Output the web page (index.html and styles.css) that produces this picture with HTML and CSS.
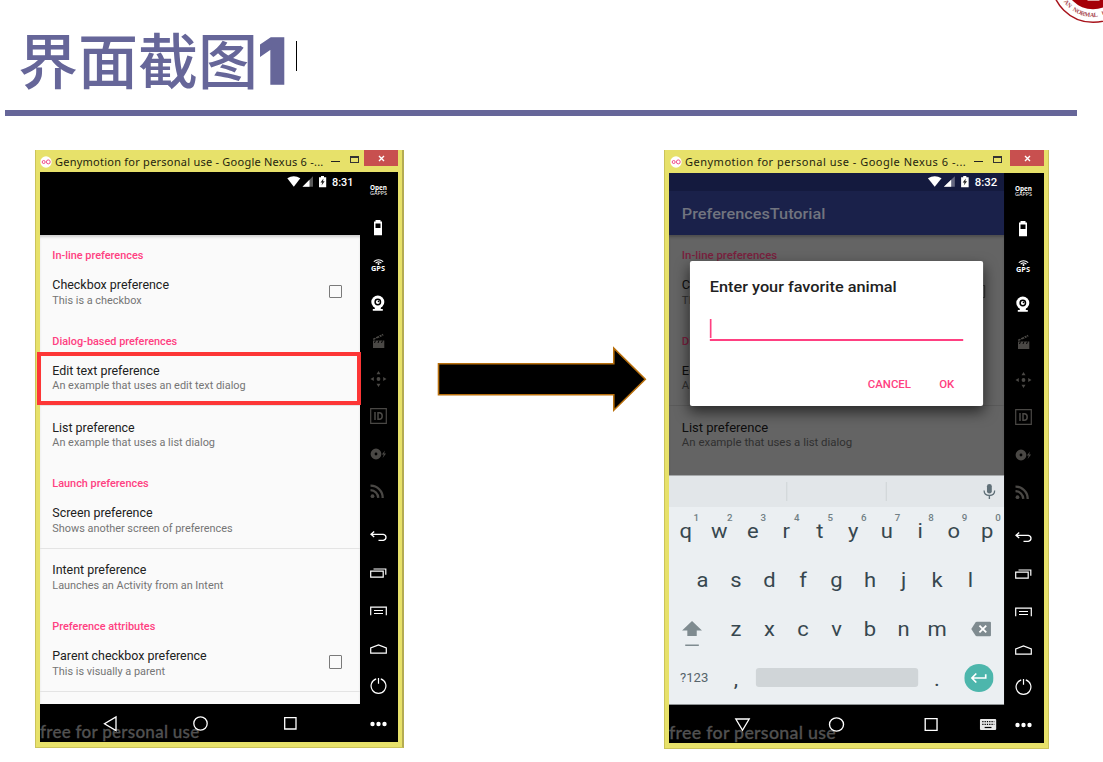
FILE: index.html
```html
<!DOCTYPE html>
<html lang="zh-CN">
<head>
<meta charset="utf-8">
<title>界面截图1</title>
<link rel="stylesheet" href="styles.css">
</head>
<body>
<svg class="defs" width="0" height="0">
  <symbol id="gapps" viewBox="0 0 20 16"><text x="1" y="7.5" class="t-open" textLength="17" lengthAdjust="spacingAndGlyphs">Open</text><text x="1" y="13.3" class="t-gapps" textLength="17" lengthAdjust="spacingAndGlyphs">GAPPS</text></symbol>
  <symbol id="battery" viewBox="0 0 20 16"><path fill="currentColor" fill-rule="evenodd" d="M6.500 0h5v1.400H13V15.300H5V1.400h1.500zM6.500 3.500v4.500h5V3.500z"/></symbol>
  <symbol id="gps" viewBox="0 0 20 16"><g fill="none" stroke="currentColor" stroke-width="1.1"><path d="M4.800 3.700Q9.500-.300 14.200 3.700M6.600 5.200Q9.500 2.500 12.400 5.200"/></g><circle cx="9.500" cy="6" r="1" fill="currentColor"/><text x="2" y="13.300" class="t-gps" textLength="14" lengthAdjust="spacingAndGlyphs">GPS</text></symbol>
  <symbol id="cam" viewBox="0 0 20 16"><circle cx="8.800" cy="7" r="6.500" fill="currentColor"/><path d="M5.800 12h6v2h2v1.700h-10V14h2z" fill="currentColor"/><circle cx="8.800" cy="7" r="2.700" fill="none" stroke="#000" stroke-width="1.500"/><circle cx="9.500" cy="6.400" r=".8" fill="#000"/></symbol>
  <symbol id="clap" viewBox="0 0 20 16"><path fill="currentColor" d="M4 7.500h11.300V15H4zM3.800 5.700 13.800.8l.8 1.600L4.600 7z"/><path stroke="#000" stroke-width="1" d="m6 4 1.500 2M9.500 2.300 11 4.300M12 1.200l1.500 2M6.500 7.500 5.500 10M10 7.500 9 10M13.500 7.500l-1 2.500"/></symbol>
  <symbol id="move" viewBox="0 0 20 16"><path fill="currentColor" d="m9.500 0 2 3.300h-4zM9.500 16l2-3.300h-4zM1.500 8l3.300-2v4zM17.500 8l-3.300-2v4z"/><circle cx="9.500" cy="8" r="1.900" fill="currentColor"/></symbol>
  <symbol id="ident" viewBox="0 0 20 16"><path fill="none" stroke="currentColor" stroke-width="1.200" d="M1.700.6h15.600v14.800H1.700z"/><path fill="none" stroke="currentColor" stroke-width="1.500" d="M6 4v8M9 4.700v6.600h1.300q2.900 0 2.900-3.300t-2.900-3.300z"/></symbol>
  <symbol id="disc" viewBox="0 0 20 16"><circle cx="7" cy="8" r="3.400" fill="none" stroke="currentColor" stroke-width="4"/><path fill="currentColor" d="m16 4.500-3.200 4h2l-1.200 3.500 3.500-4.600h-2z"/></symbol>
  <symbol id="rss" viewBox="0 0 20 16"><circle cx="3.500" cy="12.200" r="1.900" fill="currentColor"/><path fill="none" stroke="currentColor" stroke-width="2.300" d="M1.500 6.100a8 8 0 0 1 7.800 7.800M1.500 1.700a12 12 0 0 1 12.200 12.200"/></symbol>
  <symbol id="back" viewBox="0 0 20 16"><path fill="none" stroke="currentColor" stroke-width="1.300" d="M5.200 3.500 2 6.300l3.200 2.800M2.300 6.300h12q2.700.4 2.700 3t-2.700 3H9.500"/></symbol>
  <symbol id="recent" viewBox="0 0 20 16"><path fill="none" stroke="currentColor" stroke-width="1.200" d="M1.700 6.200h12.500v6H1.700zM4.500 4h12.300v5.700"/></symbol>
  <symbol id="menu" viewBox="0 0 20 16"><path fill="none" stroke="currentColor" stroke-width="1.200" d="M1.700 12.300V4.200h15.600v8.100M5 7.500h9M5 10.500h9"/></symbol>
  <symbol id="home" viewBox="0 0 20 16"><path fill="none" stroke="currentColor" stroke-width="1.200" d="M1.700 12.200V7L9.500 4l7.800 3v5.200z"/></symbol>
  <symbol id="power" viewBox="0 0 20 16"><path fill="none" stroke="currentColor" stroke-width="1.200" d="M7.200.9a7.400 7.400 0 1 0 4.600 0M9.500-.5v6.300"/></symbol>
  <symbol id="dots" viewBox="0 0 20 16"><g fill="currentColor"><circle cx="3.500" cy="8" r="2.200"/><circle cx="9.500" cy="8" r="2.200"/><circle cx="15.500" cy="8" r="2.200"/></g></symbol>
  <symbol id="status" viewBox="0 0 42 12"><path fill="#fff" d="M.3 2.300Q6.800-1.700 13.300 2.300L6.800 10.800z"/><path fill="#fff" opacity=".35" d="M26 .3v10.500H15.500z"/><path fill="#fff" d="M22.500 3.700v7.100h-7z"/><path fill="#fff" d="M34 0h3v1.200h2.200v10H32v-10h2z"/><path fill="#222" d="m36.500 2.500-3 4h1.800L34.500 9.500l3.200-4.200H36z"/></symbol>
  <symbol id="gm" viewBox="0 0 12 12"><circle cx="6" cy="6" r="5.700" fill="#fff"/><g fill="none" stroke="#ee4f8c" stroke-width="1"><circle cx="3.700" cy="6" r="1.500"/><ellipse cx="8.300" cy="5.900" rx="1.900" ry="2"/></g></symbol>
</svg>

<header class="slide-head">
  <h1 class="slide-title"><span class="han">界面截图</span><span class="num">1</span><i class="text-caret"></i></h1>
  <svg class="seal" width="51" height="26" viewBox="1052 0 51 26">
    <circle cx="1093" cy="-19" r="41.300" fill="#fff" stroke="#a8141c" stroke-width="1.500"/>
    <circle cx="1093" cy="-19" r="28.300" fill="#a50008"/>
    <path d="M1087.500.5h12" stroke="#dda0a0" stroke-width="1"/>
    <path id="ring" fill="none" d="M1057-19a36 36 0 0 0 72 0"/>
    <text class="seal-text"><textPath href="#ring" startOffset="22">AN</textPath></text>
    <text class="seal-text"><textPath href="#ring" startOffset="34.500" textLength="27">NORMAL</textPath></text>
    <text class="seal-text"><textPath href="#ring" startOffset="66">U</textPath></text>
  </svg>
</header>

<main class="stage">
  <section class="window left">
    <div class="titlebar">
      <svg class="gm" width="12" height="12"><use href="#gm"/></svg>
      <span class="caption">Genymotion for personal use - Google Nexus 6 -...</span>
      <i class="min"></i><i class="max"></i><span class="close"><svg width="7" height="7" viewBox="0 0 7 7"><path d="m1 1 5 5M6 1 1 6"/></svg></span>
    </div>
    <div class="device">
      <div class="screen">
        <div class="statusbar"><svg width="42" height="12"><use href="#status"/></svg><span>8:31</span></div>
        <div class="appbar"></div>
        <div class="list">
          <h2>In-line preferences</h2>
          <div class="pref"><b>Checkbox preference</b><small>This is a checkbox</small><i class="box"></i></div>
          <h2>Dialog-based preferences</h2>
          <div class="pref line"><b>Edit text preference</b><small>An example that uses an edit text dialog</small><div class="highlight"></div></div>
          <div class="pref"><b>List preference</b><small>An example that uses a list dialog</small></div>
          <h2>Launch preferences</h2>
          <div class="pref line"><b>Screen preference</b><small>Shows another screen of preferences</small></div>
          <div class="pref"><b>Intent preference</b><small>Launches an Activity from an Intent</small></div>
          <h2>Preference attributes</h2>
          <div class="pref line"><b>Parent checkbox preference</b><small>This is visually a parent</small><i class="box"></i></div>
        </div>
        <div class="navbar">
          <span class="watermark">free for personal use</span>
          <svg width="320" height="38" viewBox="0 0 320 38"><g fill="none" stroke="#fff" stroke-width="1.300"><path d="M76 13v13.500l-11.500-6.800z"/><circle cx="160.500" cy="19.500" r="6.700"/><path d="M244.700 13.700h11.300v11.300h-11.300z"/></g></svg>
        </div>
      </div>
      <div class="tools">
        <svg><use href="#gapps"/></svg><svg><use href="#battery"/></svg><svg><use href="#gps"/></svg><svg><use href="#cam"/></svg>
        <svg class="off"><use href="#clap"/></svg><svg class="off"><use href="#move"/></svg><svg class="off"><use href="#ident"/></svg><svg class="off"><use href="#disc"/></svg><svg class="off"><use href="#rss"/></svg>
        <svg class="first-key"><use href="#back"/></svg><svg><use href="#recent"/></svg><svg><use href="#menu"/></svg><svg><use href="#home"/></svg><svg><use href="#power"/></svg><svg><use href="#dots"/></svg>
      </div>
    </div>
  </section>

  <svg class="arrow" width="214" height="70" viewBox="434 344 214 70"><path d="M438.500 363.700h175.300v-15.500l31.500 31-31.500 31V394.700H438.500z"/></svg>

  <section class="window right">
    <div class="titlebar">
      <svg class="gm" width="12" height="12"><use href="#gm"/></svg>
      <span class="caption">Genymotion for personal use - Google Nexus 6 -...</span>
      <i class="min"></i><i class="max"></i><span class="close"><svg width="7" height="7" viewBox="0 0 7 7"><path d="m1 1 5 5M6 1 1 6"/></svg></span>
    </div>
    <div class="device">
      <div class="screen-slot">
      <div class="screen">
        <div class="statusbar"><svg width="42" height="12"><use href="#status"/></svg><span>8:32</span></div>
        <div class="appbar">PreferencesTutorial</div>
        <div class="list">
          <h2>In-line preferences</h2>
          <div class="pref"><b>Checkbox preference</b><small>This is a checkbox</small><i class="box"></i></div>
          <h2>Dialog-based preferences</h2>
          <div class="pref line"><b>Edit text preference</b><small>An example that uses an edit text dialog</small></div>
          <div class="pref"><b>List preference</b><small>An example that uses a list dialog</small></div>
        </div>
        <div class="dialog">
          <div class="dialog-title">Enter your favorite animal</div>
          <div class="field"></div>
          <div class="actions"><span>CANCEL</span><span>OK</span></div>
        </div>
        <div class="suggest"><i></i><i></i><svg width="12" height="16" viewBox="0 0 12 16"><rect x="3.700" y="0" width="4.600" height="9.500" rx="2.300" fill="#607078"/><path fill="none" stroke="#607078" stroke-width="1.300" d="M.9 6.500q.2 5 5.100 5t5.100-5M6 11.500V15"/></svg></div>
        <div class="keys">
          <div class="row"><span>q<sup>1</sup></span><span>w<sup>2</sup></span><span>e<sup>3</sup></span><span>r<sup>4</sup></span><span>t<sup>5</sup></span><span>y<sup>6</sup></span><span>u<sup>7</sup></span><span>i<sup>8</sup></span><span>o<sup>9</sup></span><span>p<sup>0</sup></span></div>
          <div class="row"><span>a</span><span>s</span><span>d</span><span>f</span><span>g</span><span>h</span><span>j</span><span>k</span><span>l</span></div>
          <div class="row"><span class="wide"><svg class="shift" width="20" height="28" viewBox="0 0 20 28"><path fill="#7f8b90" d="m10 2 9.500 9.500h-5V17h-9v-5.500h-5zM3.500 25.500h13v1.500h-13z"/></svg></span><span>z</span><span>x</span><span>c</span><span>v</span><span>b</span><span>n</span><span>m</span><span class="wide"><svg class="erase" width="20" height="16" viewBox="0 0 20 16"><path fill="#7f8b90" d="M6 .7h12.500q1 0 1 1v12.600q0 1-1 1H6q-.8 0-1.300-.7L.7 8l4-6.600Q5.200.7 6 .7z"/><path stroke="#fff" stroke-width="1.700" d="m8.500 4.700 6.500 6.600m0-6.600-6.500 6.600"/></svg></span></div>
          <div class="row last"><span class="wide sym">?123</span><span class="punct">,</span><span class="space"></span><span class="punct">.</span><span class="wide"><svg width="28" height="28" viewBox="0 0 28 28"><circle cx="14" cy="14" r="14" fill="#4db6ac"/><path fill="none" stroke="#fff" stroke-width="1.600" d="M11.500 9.500 7.300 14l4.200 4.500M7.500 14h13v-3.800"/></svg></span></div>
        </div>
        <div class="navbar">
          <span class="watermark">free for personal use</span>
          <svg width="320" height="38" viewBox="0 0 320 38"><g fill="none" stroke="#fff" stroke-width="1.300"><path d="M63.800 14h12.800l-6.400 11.300z"/><circle cx="160" cy="19.500" r="6.700"/><path d="M244.700 13.700h11.300v11.600h-11.300z"/></g><rect x="297" y="14" width="15.500" height="11" rx="1" fill="#e8e8e8"/><path stroke="#000" stroke-width="1.200" stroke-dasharray="1.200 1" d="M299.200 16.700h11.500M299.200 19.400h11.500"/><path stroke="#000" stroke-width="1.200" d="M301.500 22.500h6.500"/></svg>
        </div>
      </div>
      </div>
      <div class="tools">
        <svg><use href="#gapps"/></svg><svg><use href="#battery"/></svg><svg><use href="#gps"/></svg><svg><use href="#cam"/></svg>
        <svg class="off"><use href="#clap"/></svg><svg class="off"><use href="#move"/></svg><svg class="off"><use href="#ident"/></svg><svg class="off"><use href="#disc"/></svg><svg class="off"><use href="#rss"/></svg>
        <svg class="first-key"><use href="#back"/></svg><svg><use href="#recent"/></svg><svg><use href="#menu"/></svg><svg><use href="#home"/></svg><svg><use href="#power"/></svg><svg><use href="#dots"/></svg>
      </div>
    </div>
  </section>
</main>
</body>
</html>
```
FILE: styles.css
```css
* { box-sizing: border-box; }
body { margin: 0; width: 1103px; height: 762px; overflow: hidden; background: #fff; font-family: Roboto, "Noto Sans CJK SC", sans-serif; }
.defs { position: absolute; }
.t-open { font: 700 7.5px "Open Sans", sans-serif; fill: #fff; }
.t-gapps { font: 5.5px "Open Sans", sans-serif; fill: #fff; }
.t-gps { font: 700 6.5px "Open Sans", sans-serif; fill: #fff; }

.slide-head { display: flex; justify-content: space-between; height: 116px; position: relative; }
.slide-head::after { content: ""; position: absolute; left: 5px; top: 110px; width: 1072px; height: 6px; background: #669; }
.slide-title { display: flex; align-items: flex-start; margin: 0; padding-left: 18px; height: 110px; color: #669; font-weight: 400; }
.han { font: 500 60px/60px "Noto Sans CJK SC", sans-serif; padding-top: 28px; width: 240px; white-space: nowrap; }
.num { font: 900 63px/60px Inter, sans-serif; padding-top: 31px; width: 38px; -webkit-text-stroke: 1.5px #669; }
.text-caret { width: 1px; height: 30px; margin-top: 41px; background: #000; }
.seal { display: block; }
.seal-text { font: 700 6.3px "Liberation Serif", serif; fill: #a84a50; }

.stage { display: flex; align-items: flex-start; padding: 34px 0 0 35px; }
.window { position: relative; display: flex; flex-direction: column; background: #e7e16a; border: 1px solid #cbc35a; border-top: 0; }
.window.left { width: 369px; height: 598px; border-right: 2px solid #b5ac52; padding: 0 4px; }
.window.right { width: 385px; height: 599px; margin-left: 16px; padding: 0 4px; }
.arrow { margin: 194px 0 0 30px; flex: none; }
.arrow path { fill: #000; stroke: #b86f0c; stroke-width: 1.6; }

.titlebar { display: flex; align-items: flex-start; height: 22px; flex: none; }
.right .titlebar { height: 23px; }
.gm { margin-top: 6px; flex: none; }
.caption { margin-left: 3px; font: 11px/23px "Noto Sans", sans-serif; color: #24240f; white-space: nowrap; flex: none; width: 276px; letter-spacing: .24px; }
.min { width: 9px; height: 1px; margin-top: 11px; background: #222; }
.max { width: 9px; height: 7px; margin: 6px 0 0 10px; border: 1px solid #333; border-top-width: 2px; }
.close { display: flex; align-items: center; justify-content: center; width: 34px; height: 16px; margin-left: auto; background: #c8504f; }
.close path { stroke: #fff; stroke-width: 1.4; }
.right .gm { margin-left: 1px; }
.right .caption { width: 289px; letter-spacing: .5px; }

.device { display: flex; background: #000; height: 570px; }
.screen { position: relative; width: 320px; height: 570px; flex: none; display: flex; flex-direction: column; }
.screen-slot { width: 335px; flex: none; }
.right .screen { transform: scaleX(1.047); transform-origin: 0 0; }
.statusbar { display: flex; align-items: center; height: 20px; padding-left: 247px; color: #fff; font-size: 10.9px; font-weight: 500; gap: 3px; flex: none; }
.statusbar span { padding-top: 1px; }
.appbar { height: 43px; flex: none; }
.list { position: relative; height: 469px; flex: none; background: #fafafa; box-shadow: inset 0 3px 3px -1px #ccc; }
.list h2 { margin: 0; height: 28.5px; padding: 13px 0 0 12.3px; font: 500 10.9px/16px Roboto, sans-serif; color: #ff4081; }
.pref { position: relative; display: flex; flex-direction: column; height: 57.1px; padding: 13.5px 0 0 12.3px; }
.pref b { font: 400 12.45px/15.6px Roboto, sans-serif; color: #212121; }
.pref small { font: 400 10.9px/16px Roboto, sans-serif; color: #757575; }
.pref.line { border-bottom: 1px solid #e4e4e4; }
.box { position: absolute; left: 288.5px; top: 21px; width: 13.5px; height: 13.5px; border: 1.5px solid #7a7a7a; border-radius: 1px; }
.highlight { position: absolute; left: -3px; top: 3px; width: 324px; height: 53px; border: 4px solid #fd3636; z-index: 2; }
.navbar { position: relative; height: 38px; background: #000; flex: none; overflow: hidden; }
.navbar svg { position: relative; display: block; }
.watermark { position: absolute; left: 0; top: 17px; font: 500 17px/22px Lato, sans-serif; letter-spacing: .27px; color: #515151; white-space: nowrap; -webkit-text-stroke: .3px #515151; }

.tools { display: flex; flex-direction: column; align-items: center; width: 38px; color: #fff; }
.tools svg { width: 20px; height: 16px; margin: 10.2px 0 11.5px; flex: none; overflow: visible; }
.tools .off { color: #4a4845; }
.tools .first-key { margin-top: 16.4px; }
.right .tools { width: 39px; }

.right .statusbar { background: #141a3e; height: 18px; }
.right .appbar { background: #1a214a; color: #71747f; font: 500 15.56px/47px Roboto, sans-serif; padding-left: 12.3px; height: 44px; }
.right .list { height: 240px; background: #646464; overflow: hidden; box-shadow: inset 0 3px 3px -1px #4c4c4c; }
.right .list h2 { color: #7a1f3e; }
.right .pref b { color: #0d0d0d; }
.right .pref small { color: #303030; }
.right .pref.line { border-color: #5a5a5a; }
.right .box { border-color: #303030; }
.dialog { position: absolute; left: 20px; top: 88px; width: 280px; height: 145px; background: #fff; border-radius: 2px; box-shadow: 0 6px 14px rgba(0,0,0,.6); padding: 17px 19px; }
.dialog-title { font: 500 15.56px/18px Roboto, sans-serif; color: #212121; white-space: nowrap; }
.field { height: 22px; margin-top: 23px; border-bottom: 2px solid #ff4081; background: linear-gradient(#ff4081, #ff4081) 0 0 / 1.6px 19px no-repeat; }
.actions { display: flex; justify-content: flex-end; gap: 27px; padding: 36px 8.5px 0 0; font: 500 10.9px/16px Roboto, sans-serif; color: #ff4081; }
.suggest { position: relative; display: flex; align-items: center; height: 32px; flex: none; background: #e2e6e9; border-top: 1px solid #a5a8aa; }
.suggest i { width: 1px; height: 19px; background: #cfd4d7; margin-left: 112px; }
.suggest i + i { margin-left: 94px; }
.suggest svg { margin-left: 92px; }
.keys { height: 198px; flex: none; background: #ebeff2; border-bottom: 1px solid #8e9294; color: #37474f; }
.row { display: flex; justify-content: center; height: 49px; font-size: 21px; line-height: 49px; }
.row span { position: relative; width: 32px; text-align: center; display: flex; align-items: center; justify-content: center; }
.row .wide { width: 48px; }
.row sup { position: absolute; left: 23.5px; top: 5px; font-size: 9.3px; font-weight: 500; line-height: 12px; color: #717f85; }
.row .sym { font-size: 12.5px; color: #56646b; }
.row .space { width: 155px; height: 19px; margin: 15px 2.5px; background: #d0d5d8; border-radius: 3px; }
.row .shift { margin: 6px 4px 0 0; }
.row .erase { margin: -2px 0 0 3px; }
.row .punct { padding-top: 3px; }
.last { position: relative; top: -1px; }
```
